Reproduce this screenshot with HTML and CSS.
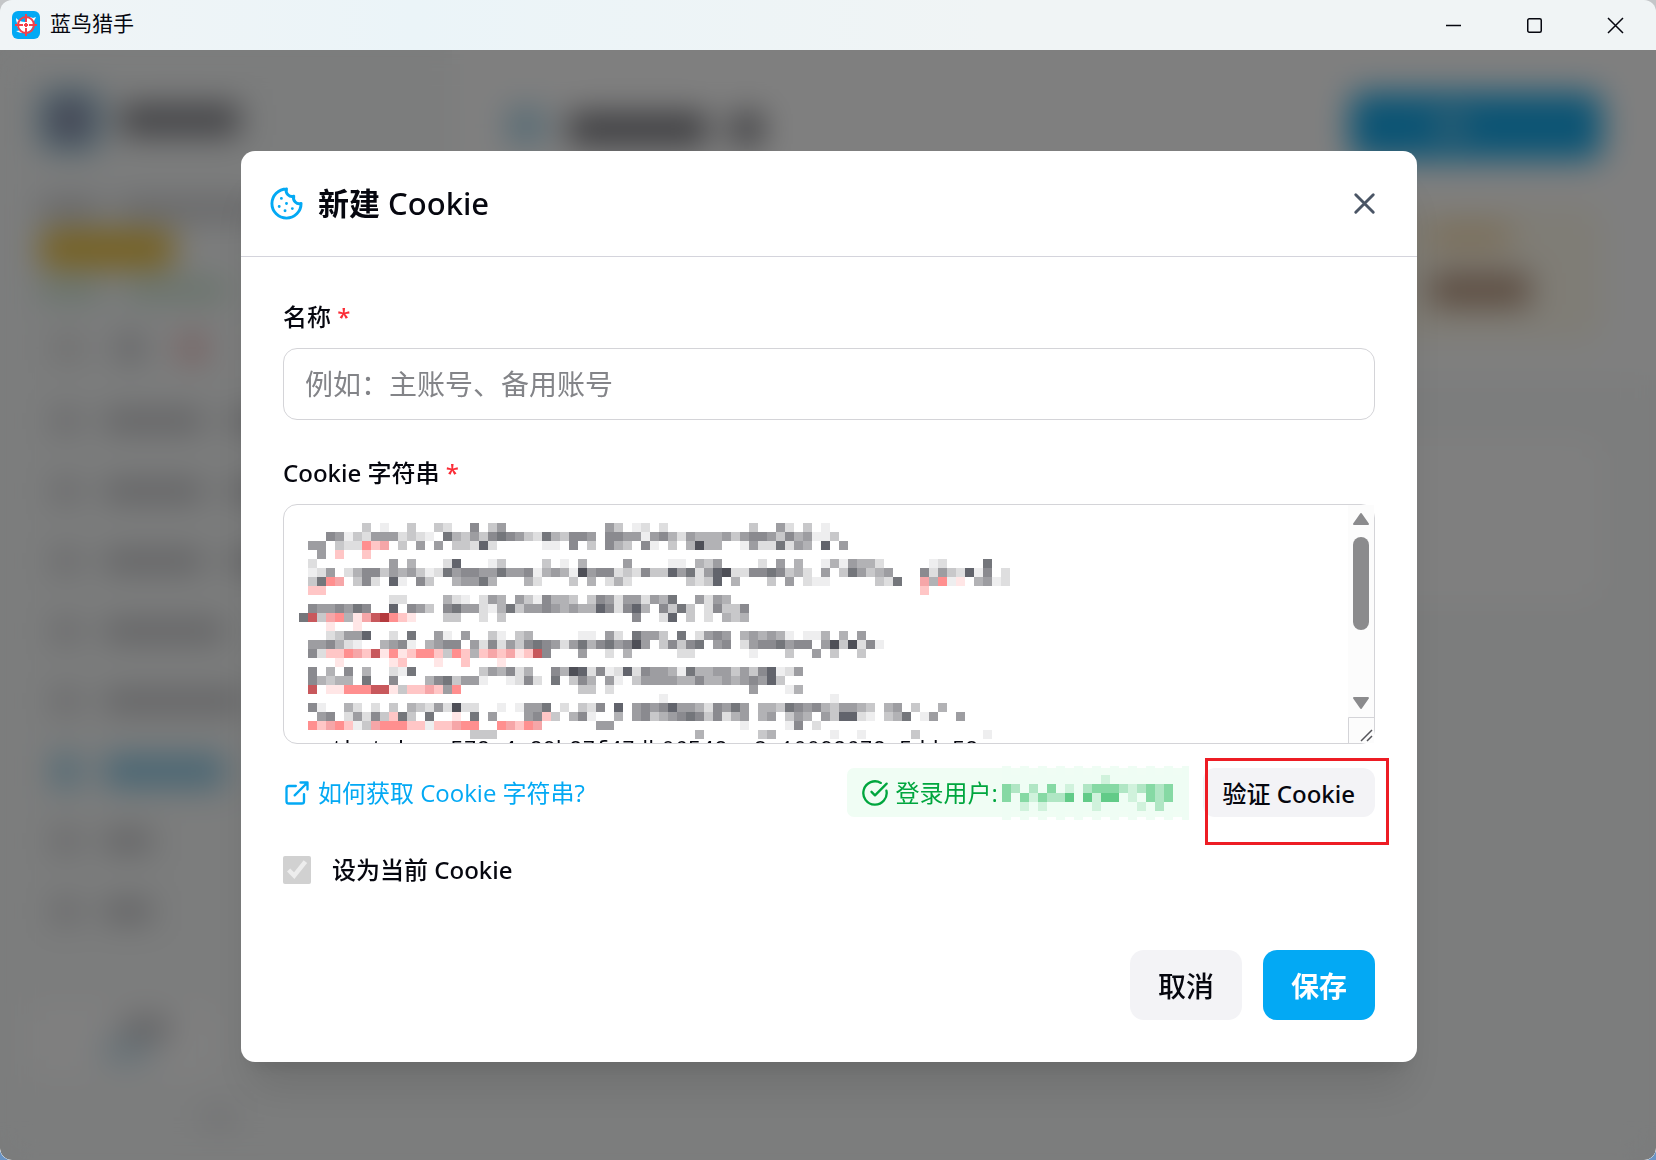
FILE: index.html
```html
<!DOCTYPE html>
<html lang="zh-CN">
<head>
<meta charset="utf-8">
<title>蓝鸟猎手</title>
<link rel="stylesheet" href="styles.css">
</head>
<body>
<div class="window">
    <header class="titlebar">
        <svg class="app-icon" viewBox="0 0 28 28">
            <rect width="28" height="28" rx="6" fill="#03a9f4"/>
            <path d="M4 7c3 3 6 4 9 4 0-4 5-6 8-4l3-1-2 4c0 7-5 12-11 12-3 0-5-1-7-2 3 0 4-1 5-2-2 0-3-2-4-3h2c-2-2-3-5-3-8z" fill="#fff"/>
            <circle cx="14" cy="14" r="8" fill="none" stroke="#f4404a" stroke-width="2"/>
            <path d="M14 3v8M14 17v8M3 14h8M17 14h8M14 12v4M12 14h4" stroke="#f4404a" stroke-width="2"/>
        </svg>
        <span class="app-name">蓝鸟猎手</span>
        <div class="win-buttons">
            <button type="button" aria-label="最小化"><svg width="17" height="17" viewBox="0 0 17 17"><path d="M1 8.5h15"/></svg></button>
            <button type="button" aria-label="最大化"><svg width="17" height="17" viewBox="0 0 17 17"><rect x="1.75" y="1.75" width="13.5" height="13.5" rx="1.5"/></svg></button>
            <button type="button" aria-label="关闭"><svg width="17" height="17" viewBox="0 0 17 17"><path d="M1 1l15 15M16 1L1 16"/></svg></button>
        </div>
    </header>

    <div class="stage">
        <!-- page behind the dialog -->
        <div class="app" aria-hidden="true">
            <aside class="sidebar">
                <div class="brand"><i class="logo"></i><i class="bar brand-name"></i></div>
                <div class="user"><i class="bar w60"></i><i class="bar w140"></i></div>
                <div class="vip"></div>
                <div class="status"><i class="bar w60"></i><i class="bar w100"></i></div>
                <div class="tools"><i></i><i class="mid"></i><i class="red"></i></div>
                <div class="nav">
                    <div class="item"><i class="dot"></i><i class="bar w100"></i><i class="bar w60"></i></div>
                    <div class="item"><i class="dot"></i><i class="bar w100"></i><i class="bar w60"></i></div>
                    <div class="item"><i class="dot"></i><i class="bar w100"></i><i class="bar w60"></i></div>
                    <div class="item"><i class="dot"></i><i class="bar w120"></i></div>
                    <div class="item"><i class="dot"></i><i class="bar w140"></i></div>
                    <div class="item active"><i class="dot"></i><i class="bar w120"></i></div>
                    <div class="item"><i class="dot"></i><i class="bar w48"></i></div>
                    <div class="item"><i class="dot"></i><i class="bar w48"></i></div>
                </div>
                <div class="theme"><i class="bar w48"></i><i class="bar w48 blue"></i></div>
                <div class="version"><i class="bar w30"></i></div>
            </aside>
            <div class="main">
                <div class="top">
                    <div class="top-row">
                        <i class="page-icon"></i><i class="bar w140"></i><i class="bar w30"></i>
                        <div class="new-btn"><i></i></div>
                    </div>
                    <div class="stat"><i class="bar w80"></i><i class="bar w100"></i></div>
                </div>
                <div class="list"></div>
            </div>
        </div>

        <div class="overlay">
            <div class="modal" role="dialog" aria-labelledby="dlg-title">
                <div class="modal-head">
                    <svg class="icon cookie" viewBox="0 0 24 24"><path d="M12 2a10 10 0 1 0 10 10 4 4 0 0 1-5-5 4 4 0 0 1-5-5"/><path d="M8.5 8.5v.01M16 15.5v.01M12 12v.01M11 17v.01M7 14v.01"/></svg>
                    <h2 id="dlg-title">新建 <span>Cookie</span></h2>
                    <button type="button" class="close" aria-label="关闭"><svg class="icon" viewBox="0 0 24 24"><path d="M18 6 6 18M6 6l12 12"/></svg></button>
                </div>
                <form class="modal-body">
                    <div class="field">
                        <label for="name">名称 <span class="req">*</span></label>
                        <input type="text" id="name" placeholder="例如：主账号、备用账号">
                    </div>
                    <div class="field">
                        <label for="cookie">Cookie 字符串 <span class="req">*</span></label>
                        <div class="area">
                            <textarea id="cookie" spellcheck="false">






auth_token=573a4e39b27f47db06543ce8a10093672a5ddc53</textarea>
                            <svg class="mosaic" id="mosaic" width="711" height="216" viewBox="0 0 711 216"></svg>
                            <svg class="scroll" width="26" height="238" viewBox="0 0 26 238">
                                <rect width="26" height="238" fill="#fcfcfc"/>
                                <path d="M13 9l7 10H6z" fill="#8b8b8d" stroke="#8b8b8d" stroke-width="2" stroke-linejoin="round"/>
                                <rect x="5" y="32" width="16" height="93" rx="8" fill="#8b8b8d"/>
                                <path d="M13 203l7-10H6z" fill="#8b8b8d" stroke="#8b8b8d" stroke-width="2" stroke-linejoin="round"/>
                                <path d="M0.5 238V212.500H26" fill="none" stroke="#d4d4d8"/>
                                <path d="M13 236L24 225M19 236l5-5" stroke="#55555a" stroke-width="1.500"/>
                            </svg>
                        </div>
                    </div>
                    <div class="tools-row">
                        <a href="#"><svg class="icon" viewBox="0 0 24 24"><path d="M15 3h6v6M10 14 21 3M18 13v6a2 2 0 0 1-2 2H5a2 2 0 0 1-2-2V8a2 2 0 0 1 2-2h6"/></svg>如何获取 Cookie 字符串?</a>
                        <div class="badge">
                            <svg class="icon" viewBox="0 0 24 24"><path d="M21.801 10A10 10 0 1 1 17 3.335"/><path d="m9 11 3 3L22 4"/></svg>登录用户:
                            <svg class="user-mosaic" id="user-mosaic" width="192" height="54" viewBox="0 0 192 54"></svg>
                        </div>
                        <div class="verify">
                            <button type="button">验证 Cookie</button>
                            <div class="mark"></div>
                        </div>
                    </div>
                    <div class="check">
                        <input type="checkbox" id="current" checked disabled>
                        <label for="current">设为当前 Cookie</label>
                    </div>
                    <div class="actions">
                        <button type="button" class="cancel">取消</button>
                        <button type="submit" class="save">保存</button>
                    </div>
                </form>
            </div>
        </div>
    </div>
</div>
<script src="mosaic.js"></script>
</body>
</html>
```

FILE: styles.css
```css
* {
    box-sizing: border-box;
}
body {
    margin: 0;
    background: linear-gradient(#c4c6c8 50%, #6a94c4 50%);
    font-family: "Open Sans", "Noto Sans CJK SC", sans-serif;
    color: #06070f;
}
button, input, textarea {
    font-family: inherit;
    color: inherit;
}
button {
    border: none;
    padding: 0;
    cursor: pointer;
}
.window {
    min-height: 100vh;
    display: flex;
    flex-direction: column;
    border-radius: 12px;
    overflow: hidden;
}

/* title bar */
.titlebar {
    height: 50px;
    display: flex;
    align-items: center;
    background: linear-gradient(90deg, #f0f4f6, #ebf4f8 25%, #f0f4f5 60%);
    padding-left: 12px;
    gap: 10px;
}
.app-icon {
    width: 28px;
    height: 28px;
}
.app-name {
    font-family: "Noto Sans CJK SC", sans-serif;
    font-size: 21px;
    line-height: 30px;
    padding-bottom: 6px;
}
.win-buttons {
    margin-left: auto;
    display: flex;
}
.win-buttons button {
    width: 81px;
    height: 50px;
    background: none;
    display: flex;
    align-items: center;
    justify-content: center;
}
.win-buttons svg {
    fill: none;
    stroke: #06070f;
    stroke-width: 1.5;
}

/* page behind the dialog */
.stage {
    flex: 1;
    display: grid;
    background: #fff;
}
.app, .overlay {
    grid-area: 1 / 1;
}
.app {
    display: flex;
}
.bar {
    height: 20px;
    background: #bcbcc0;
}
.w30 { width: 30px; }
.w48 { width: 48px; }
.w60 { width: 60px; }
.w80 { width: 80px; }
.w100 { width: 100px; }
.w120 { width: 120px; }
.w140 { width: 140px; }
.sidebar {
    width: 452px;
    background: #f8fafa;
    padding: 40px 24px 0 40px;
}
.sidebar > div {
    display: flex;
    align-items: center;
}
.brand {
    height: 60px;
    gap: 20px;
}
.logo {
    width: 60px;
    height: 60px;
    border-radius: 14px;
    background: radial-gradient(#b07890 15%, #7cacc8 45%);
}
.brand-name {
    width: 120px;
    height: 32px;
    background: #84848a;
}
.user {
    height: 70px;
    padding-top: 48px;
    gap: 18px;
}
.user .bar {
    background: #c8c8cc;
}
.vip {
    width: 134px;
    height: 38px;
    margin-top: 10px;
    border-radius: 10px;
    background: #ecc03c;
}
.status {
    height: 44px;
    gap: 26px;
}
.status .bar {
    height: 14px;
    background: #b8dcc0;
}
.tools {
    height: 72px;
    padding-left: 14px;
    gap: 34px;
}
.tools i {
    width: 28px;
    height: 28px;
    background: #dcdcdc;
}
.tools .mid {
    background: #c8c8cc;
}
.tools .red {
    background: #f0c0c0;
}
.sidebar > .nav {
    display: block;
    margin-left: -6px;
    padding-top: 2px;
}
.item {
    height: 70px;
    display: flex;
    align-items: center;
    padding-left: 20px;
    gap: 26px;
}
.item .dot {
    width: 24px;
    height: 24px;
    background: #c8c8cc;
}
.active .dot, .active .bar {
    height: 32px;
    background: #8ccae6;
}
.sidebar > .theme {
    width: 190px;
    height: 76px;
    margin: 56px 0 0 -14px;
    padding-left: 50px;
    border-radius: 14px;
    background: #fff;
    flex-direction: column;
    justify-content: center;
    gap: 4px;
}
.theme .blue {
    background: #c4e0ee;
    margin-right: 40px;
}
.version {
    height: 80px;
    padding-left: 164px;
}
.version .bar {
    background: #e0e0e4;
}
.main {
    flex: 1;
    background: #f8fafa;
}
.top {
    height: 330px;
    padding: 42px 54px 0 56px;
    background: #fff;
}
.top-row {
    height: 68px;
    display: flex;
    align-items: center;
    gap: 24px;
}
.top-row .bar {
    height: 32px;
    margin-top: 6px;
    background: #74747a;
}
.page-icon {
    width: 36px;
    height: 36px;
    background: #a8d4e8;
}
.new-btn {
    width: 252px;
    height: 68px;
    margin-left: auto;
    padding: 24px 86px;
    border-radius: 14px;
    background: #18a8e8;
}
.new-btn i {
    display: block;
    width: 30px;
    height: 20px;
    background: #80c8e8;
}
.stat {
    height: 136px;
    margin: 45px 0 0 700px;
    padding: 18px 0 0 222px;
    background: #fffaec;
    border-radius: 20px;
}
.stat .bar {
    display: block;
    height: 26px;
    margin-bottom: 24px;
    background: #f6dcb0;
}
.stat .w100 {
    height: 34px;
    background: #b89880;
}
.list {
    height: 165px;
    margin: 58px 54px 0 56px;
    border-radius: 20px;
    background: #fff;
}

/* dialog */
.overlay {
    display: flex;
    align-items: center;
    justify-content: center;
    padding: 3px 0 0 2px;
    background: rgba(0, 0, 0, 0.5);
    backdrop-filter: blur(16px);
}
.modal {
    width: 80%;
    max-width: 1176px;
    background: #fff;
    border-radius: 14px;
    box-shadow: 0 35px 44px -9px rgba(0, 0, 0, 0.1), 0 14px 18px -10px rgba(0, 0, 0, 0.1);
}
.icon {
    width: 28px;
    height: 28px;
    flex: none;
    fill: none;
    stroke: currentColor;
    stroke-width: 2;
    stroke-linecap: round;
    stroke-linejoin: round;
}
.modal-head {
    display: flex;
    align-items: center;
    gap: 14px;
    padding: 28px;
    border-bottom: 1px solid #d4d4dc;
}
.modal-head .icon {
    width: 35px;
    height: 35px;
}
.cookie {
    color: #03a9f4;
}
.modal-head h2 {
    margin: 0;
    font-family: "Noto Sans", "Noto Sans CJK SC", sans-serif;
    font-size: 31px;
    line-height: 49px;
    font-weight: 700;
}
.modal-head h2 span {
    font-weight: 500;
}
.close {
    margin-left: auto;
    width: 49px;
    height: 49px;
    padding: 7px;
    background: none;
    color: #4a5565;
}
.modal-body {
    padding: 42px;
    font-size: 24px;
    line-height: 35px;
}
.field {
    margin-bottom: 35px;
}
.field label {
    display: block;
    margin-bottom: 14px;
}
.field label, .check label, .verify button {
    font-family: "Noto Sans", "Noto Sans CJK SC", sans-serif;
    font-weight: 500;
}
.req {
    color: #fb2c36;
}
.field input, .field textarea {
    display: block;
    width: 100%;
    border: 1px solid #d4d4d8;
    border-radius: 14px;
    background: #fff;
    outline: none;
}
.field input {
    height: 72px;
    padding: 0 21px;
    font-size: 28px;
}
.field input::placeholder {
    color: #838488;
}
.area {
    position: relative;
}
.field textarea {
    height: 240px;
    padding: 12px 21px 0;
    font-family: "Liberation Mono", monospace;
    font-size: 22px;
    line-height: 36px;
    resize: none;
    overflow: hidden;
}
.mosaic {
    position: absolute;
    left: 16px;
    top: 19px;
}
.scroll {
    position: absolute;
    right: 1px;
    top: 1px;
}
.tools-row {
    display: flex;
    align-items: center;
    gap: 14px;
    margin-top: -11px;
}
.tools-row a {
    display: flex;
    align-items: center;
    gap: 7px;
    margin-right: auto;
    color: #03a9f4;
    text-decoration: none;
}
.badge {
    position: relative;
    display: flex;
    align-items: center;
    gap: 7px;
    width: 342px;
    height: 49px;
    padding: 0 14px;
    border-radius: 7px;
    background: #f0fdf4;
    color: #00a63e;
}
.user-mosaic {
    position: absolute;
    right: 0;
    top: -2px;
}
.verify {
    position: relative;
}
.verify button {
    height: 49px;
    padding: 0 20px;
    border-radius: 12px;
    background: #f3f3f6;
    font-size: 24px;
}
.mark {
    position: absolute;
    top: -10px;
    right: -14px;
    width: 184px;
    height: 87px;
    border: 3px solid #ed1c24;
    pointer-events: none;
}
.check {
    display: flex;
    align-items: center;
    gap: 21px;
    margin-top: 35px;
}
.check input {
    width: 28px;
    height: 28px;
    margin: 0;
}
.actions {
    display: flex;
    justify-content: flex-end;
    gap: 21px;
    margin-top: 63px;
}
.actions button {
    height: 70px;
    padding: 0 28px;
    border-radius: 14px;
    font-size: 28px;
    font-weight: 500;
}
.cancel {
    background: #f3f3f6;
}
.actions .save {
    background: #03a9f4;
    color: #fff;
    font-weight: 700;
}
```

FILE: mosaic.js
```js
// pixelated cover for private text: every row lists "column:shades", "." is an empty cell
const shades = {
    1: '#eeeeef', 2: '#dededf', 3: '#c8c8ca', 4: '#b2b2b5', 5: '#9d9da1', 6: '#8a8a8f',
    7: '#74767b', 8: '#62646c', 9: '#4e4f57',
    a: '#ffe6e6', b: '#ffc6c6', c: '#f6a6a8', d: '#ff8f8f', e: '#c8585c', f: '#b43a3e'
};
const greens = { 0: '#effdf4', 1: '#d0f2dc', 2: '#b0e6c4', 3: '#86d9a4', 4: '#62cb88' };

const cookieRows = [
    '7:3.1..3..32..6.35 34:53.12.2 50:3 53:52.3.1',
    '3:651325552321.743536765327436 30:665.66551564254445356653645113',
    '1:55.322dbc.3.5.5.33282 27:11.6.3.643.61.3.4944..15227254.8.5',
    '2:5.b..b',
    '1:2 10:5.4...28...13 27:3.1.4....5 41:11.435 51:2.5.4..1415442 70:12 76:7',
    '1:125.24663545312756655755614541956623263385725892266763 54:342.5.375345 69:62532816.2',
    '1:37dc.362.81.63..45574...42 30:3.4.242 43:3238.4 52:3.5.211 64:327 69:c4d1a.4512',
    '1:bb 69:b',
    '10:22 16:421.254.5316443.36525525 40:47..5254',
    '1:6556576..8.653.67552147 24:3556545448626 37:84.6373.26336',
    '0:7e3cd4aceFdba 16:33..2.3 37:6..28.3.2.434',
    '3:a..a',
    '3:23558..2.7..51.5..31.34 31:11.52.7553.7.2565.454541.114.4.5',
    '1:556421..4561.4566.5262536765257 32:46756 37:95.36367.56.256675 55:66.593926 64:1',
    '1:62bbdcbeadabddb3db4bcbcabe6 31:5..2.4 42:22 50:1...3..5.3..3',
    '4:a 10:ab...a..b...a',
    '1:6.4.6.4..217 20:354624 28:64982612826554174455353 51:68125',
    '1:64344.7..6...467355 20:1..1262.7.364.51.3555544644545653 52:83',
    '1:e.aadddeea3bbcb5d 31:33.2 50:5...14',
    '40:1 59:1',
    '1:61..42.2.3.43252922..1.1557.2.326.8 37:565685542657 49:5.44376564355 62:43.45.3..4',
    '2:56.25263b73.7..a.7.5 25:56b3.461..4.56345676362 48:45.45.354.538821.347.15..5',
    '1:dbcdb13cdddbb1bbcdd..dcbdc 33:55 49:1 54:16.2',
    '19:333 44:4 51:34 59:1..1 68:3 76:1'
];
const userRows = [
    '0:0.0.0.0.0.0.0.0.0.0.0',
    '0:000000000001000000000',
    '0:320203010233321232300',
    '0:303132240414401032300',
    '0:001010000010000102000',
    '0:0.0.0.0.0.0.0.0.0.0.0'
];

function draw(id, rows, colors, left) {
    let out = '';
    rows.forEach((row, y) => {
        row.split(' ').forEach(run => {
            const [start, cells] = run.split(':');
            [...cells.toLowerCase()].forEach((c, i) => {
                if (c === '.') return;
                out += `<rect x="${left + (+start + i) * 9}" y="${y * 9}" width="9" height="9" fill="${colors[c]}"/>`;
            });
        });
    });
    document.getElementById(id).innerHTML += out;
}

document.getElementById('user-mosaic').innerHTML = '<rect y="2" width="192" height="49" fill="#f0fdf4"/>';
draw('mosaic', cookieRows, shades, 0);
draw('user-mosaic', userRows, greens, 5);
```
